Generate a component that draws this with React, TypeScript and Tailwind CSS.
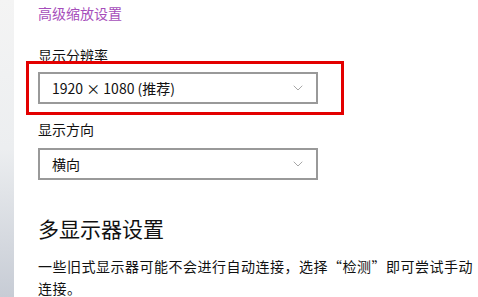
import { ChevronDown } from "lucide-react";

const font = { fontFamily: '"Noto Sans CJK SC", "Noto Sans", sans-serif' };

function Select({ value }: { value: string }) {
  return (
    <div className="flex h-[32px] w-[280px] items-center justify-between border-2 border-[#999999] bg-white pl-[12px] pr-[10px]">
      <span className="text-[14px] text-[#111]">{value}</span>
      <ChevronDown size={16} strokeWidth={1} className="text-[#7a7a7a]" />
    </div>
  );
}

export default function App() {
  return (
    <div className="flex h-[297px] w-[478px] overflow-hidden bg-white" style={font}>
      <div className="h-full w-[14px] shrink-0 bg-gradient-to-b from-[#f4f4f4] via-[#eceef0] to-[#c7ccd5]" />
      <div className="flex flex-col pl-[24px] pt-[3px]">
        <div className="text-[14px] leading-[20px] text-[#a64ebb]">高级缩放设置</div>

        <div className="mt-[22px] text-[14px] leading-[20px] text-[#111]">显示分辨率</div>
        <div className="-ml-[12px] -mt-[4px] w-[318px] border-[3px] border-[#e30000] px-[9px] py-[8px]">
          <Select value="1920 × 1080 (推荐)" />
        </div>

        <div className="mt-[4px] text-[14px] leading-[20px] text-[#111]">显示方向</div>
        <div className="mt-[9px]">
          <Select value="横向" />
        </div>

        <div className="mt-[34px] text-[21px] leading-[28px] text-[#111]">多显示器设置</div>
        <div className="mt-[13px] w-[440px] text-[14px] leading-[22px] tracking-[0.5px] text-[#111]">
          一些旧式显示器可能不会进行自动连接，选择“检测”即可尝试手动连接。
        </div>
      </div>
    </div>
  );
}
